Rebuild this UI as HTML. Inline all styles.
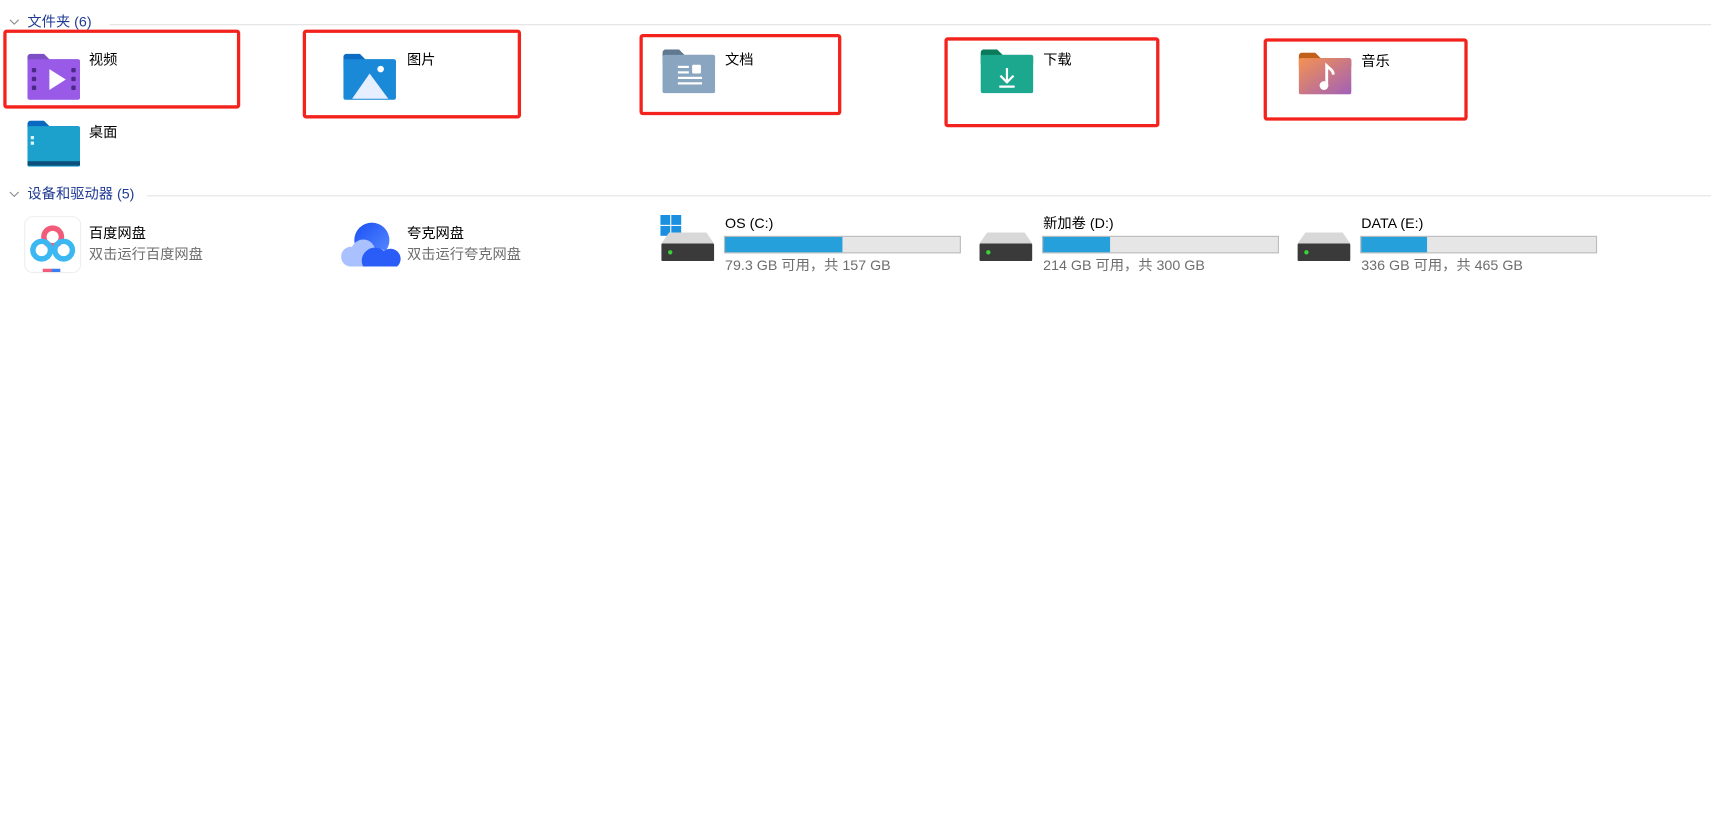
<!DOCTYPE html>
<html><head><meta charset="utf-8"><style>
body{margin:0;width:1720px;height:830px;background:#fff;position:relative;overflow:hidden;font-family:"Liberation Sans","Noto Sans CJK SC",sans-serif;}
#w{position:absolute;left:0;top:0;width:1568px;height:757px;transform:scale(1.0969);transform-origin:0 0}
.a{position:absolute}
.hd,.t,.s{line-height:16px}
.hd{font-size:13px;color:#1f3a93}
.line{height:1px;background:#e3e3e3}
.t{font-size:13px;color:#000}
.s{font-size:13px;color:#6d6d6d}
.box{border:3px solid #f4221c;border-radius:3px;box-sizing:border-box}
.bar{height:16px;background:#e6e6e6;border:1px solid #bcbcbc;box-sizing:border-box}
.bar i{display:block;height:14px;background:#26a0da}
</style></head><body><div id="w">
<svg class="a" style="left:8px;top:16px" width="10" height="8"><path d="M1 2 L5 6 L9 2" stroke="#888" fill="none"/></svg>
<div class="a hd" style="left:25px;top:12px">文件夹 (6)</div>
<div class="a line" style="left:100px;top:22px;width:1460px"></div>

<div class="a box" style="left:3px;top:27px;width:216px;height:72px"></div>
<div class="a box" style="left:276px;top:27px;width:199px;height:81px"></div>
<div class="a box" style="left:583px;top:31px;width:184px;height:74px"></div>
<div class="a box" style="left:861px;top:34px;width:196px;height:82px"></div>
<div class="a box" style="left:1152px;top:35px;width:186px;height:75px"></div>

<svg class="a" style="left:25px;top:49px" width="48" height="42"><path d="M0 3a3 3 0 0 1 3-3h12l5 5h26a2 2 0 0 1 2 2v6H0z" fill="#7c4fc4"/><rect y="5" width="48" height="37" rx="2" fill="#9a5ae8"/><polygon points="20,14 20,33 35,23.5" fill="#fff"/><g fill="#4a2a86"><rect x="4" y="13" width="4" height="4" rx="1"/><rect x="4" y="21" width="4" height="4" rx="1"/><rect x="4" y="29" width="4" height="4" rx="1"/><rect x="40" y="13" width="4" height="4" rx="1"/><rect x="40" y="21" width="4" height="4" rx="1"/><rect x="40" y="29" width="4" height="4" rx="1"/></g></svg>
<div class="a t" style="left:81px;top:47px">视频</div>
<svg class="a" style="left:313px;top:49px" width="48" height="42"><path d="M0 3a3 3 0 0 1 3-3h12l5 5h26a2 2 0 0 1 2 2v6H0z" fill="#0f6cc4"/><rect y="5" width="48" height="37" rx="2" fill="#1a8ad8"/><polygon points="8,41 24,18 41,41" fill="#e6efff"/><circle cx="34" cy="14" r="3" fill="#fff"/></svg>
<div class="a t" style="left:371px;top:47px">图片</div>
<svg class="a" style="left:604px;top:45px" width="48" height="40"><path d="M0 3a3 3 0 0 1 3-3h12l5 5h26a2 2 0 0 1 2 2v6H0z" fill="#5f7a90"/><rect y="5" width="48" height="35" rx="2" fill="#8aa5c0"/><g fill="#fff"><rect x="14" y="15" width="10" height="2"/><rect x="14" y="20" width="10" height="2"/><rect x="27" y="14" width="8" height="8" rx="1"/><rect x="14" y="25" width="22" height="2"/><rect x="14" y="30" width="22" height="2"/></g></svg>
<div class="a t" style="left:661px;top:47px">文档</div>
<svg class="a" style="left:894px;top:45px" width="48" height="40"><path d="M0 3a3 3 0 0 1 3-3h12l5 5h26a2 2 0 0 1 2 2v6H0z" fill="#0a7a5a"/><rect y="5" width="48" height="35" rx="2" fill="#1ba88e"/><path d="M24 17v13M18 24l6 6 6-6M17 34h14" stroke="#fff" stroke-width="2" fill="none"/></svg>
<div class="a t" style="left:951px;top:47px">下载</div>
<svg class="a" style="left:1184px;top:48px" width="48" height="38"><defs><linearGradient id="mg" x1="0" y1="0" x2="1" y2="1"><stop offset="0" stop-color="#f59250"/><stop offset="1" stop-color="#a060b8"/></linearGradient></defs><path d="M0 3a3 3 0 0 1 3-3h12l5 5h26a2 2 0 0 1 2 2v6H0z" fill="#c0601a"/><rect y="5" width="48" height="33" rx="2" fill="url(#mg)"/><circle cx="23" cy="30" r="4" fill="#fff"/><path d="M25.5 30V12c3 3 6 4 6 8" stroke="#fff" stroke-width="2.6" fill="none"/></svg>
<div class="a t" style="left:1241px;top:48px">音乐</div>
<svg class="a" style="left:25px;top:110px" width="48" height="42"><path d="M0 3a3 3 0 0 1 3-3h12l5 5h26a2 2 0 0 1 2 2v6H0z" fill="#0a68c0"/><rect y="5" width="48" height="37" rx="2" fill="#1ca0cc"/><rect y="37" width="48" height="4" fill="#0b4f7a"/><rect x="3" y="14" width="3" height="3" fill="#d8f4ff"/><rect x="3" y="19" width="3" height="3" fill="#d8f4ff"/></svg>
<div class="a t" style="left:81px;top:113px">桌面</div>

<svg class="a" style="left:8px;top:173px" width="10" height="8"><path d="M1 2 L5 6 L9 2" stroke="#888" fill="none"/></svg>
<div class="a hd" style="left:25px;top:169px">设备和驱动器 (5)</div>
<div class="a line" style="left:134px;top:178px;width:1426px"></div>

<div class="a" style="left:22px;top:197px;width:52px;height:52px;border:1px solid #eee;border-radius:8px;box-sizing:border-box"></div>
<svg class="a" style="left:26px;top:203px" width="44" height="46"><circle cx="22" cy="13" r="8" fill="none" stroke="#f25c7a" stroke-width="5"/><circle cx="12" cy="25" r="8" fill="none" stroke="#3bb8f2" stroke-width="5"/><circle cx="32" cy="25" r="8" fill="none" stroke="#3bb8f2" stroke-width="5"/><rect x="13" y="42" width="8" height="3" fill="#f25c7a"/><rect x="21" y="42" width="8" height="3" fill="#3b7ef2"/></svg>
<div class="a t" style="left:81px;top:205px">百度网盘</div>
<div class="a s" style="left:81px;top:224px">双击运行百度网盘</div>
<svg class="a" style="left:311px;top:199px" width="56" height="46"><defs><linearGradient id="qg" x1="0" y1="0" x2="1" y2="1"><stop offset="0" stop-color="#1a4ff5"/><stop offset="1" stop-color="#5a8cff"/></linearGradient></defs><circle cx="28" cy="20" r="16" fill="url(#qg)"/><path d="M8 44a9 9 0 0 1 2-18a11 11 0 0 1 21 3a8 8 0 0 1 8 15z" fill="#a9c2ff"/><path d="M20 44a12 12 0 0 1 19-14a8 8 0 0 1 12 14z" fill="#2a5df7"/></svg>
<div class="a t" style="left:371px;top:205px">夸克网盘</div>
<div class="a s" style="left:371px;top:224px">双击运行夸克网盘</div>

<svg class="a" style="left:602px;top:196px" width="50" height="44"><g fill="#1b8fe0"><rect x="0" y="0" width="9" height="9"/><rect x="10" y="0" width="9" height="9"/><rect x="0" y="10" width="9" height="9"/><rect x="10" y="10" width="9" height="9"/></g><path d="M8 16h34l7 10H1z" fill="#d8d8d8"/><rect x="1" y="26" width="48" height="16" rx="1" fill="#3a3a3a"/><circle cx="9" cy="34" r="2" fill="#3bd13b"/></svg>
<div class="a t" style="left:661px;top:196px">OS (C:)</div>
<div class="a bar" style="left:660px;top:215px;width:216px"><i style="width:107px"></i></div>
<div class="a s" style="left:661px;top:234px">79.3 GB 可用，共 157 GB</div>

<svg class="a" style="left:892px;top:196px" width="50" height="44"><path d="M8 16h34l7 10H1z" fill="#d8d8d8"/><rect x="1" y="26" width="48" height="16" rx="1" fill="#3a3a3a"/><circle cx="9" cy="34" r="2" fill="#3bd13b"/></svg>
<div class="a t" style="left:951px;top:196px">新加卷 (D:)</div>
<div class="a bar" style="left:950px;top:215px;width:216px"><i style="width:61px"></i></div>
<div class="a s" style="left:951px;top:234px">214 GB 可用，共 300 GB</div>

<svg class="a" style="left:1182px;top:196px" width="50" height="44"><path d="M8 16h34l7 10H1z" fill="#d8d8d8"/><rect x="1" y="26" width="48" height="16" rx="1" fill="#3a3a3a"/><circle cx="9" cy="34" r="2" fill="#3bd13b"/></svg>
<div class="a t" style="left:1241px;top:196px">DATA (E:)</div>
<div class="a bar" style="left:1240px;top:215px;width:216px"><i style="width:60px"></i></div>
<div class="a s" style="left:1241px;top:234px">336 GB 可用，共 465 GB</div>
</div></body></html>
